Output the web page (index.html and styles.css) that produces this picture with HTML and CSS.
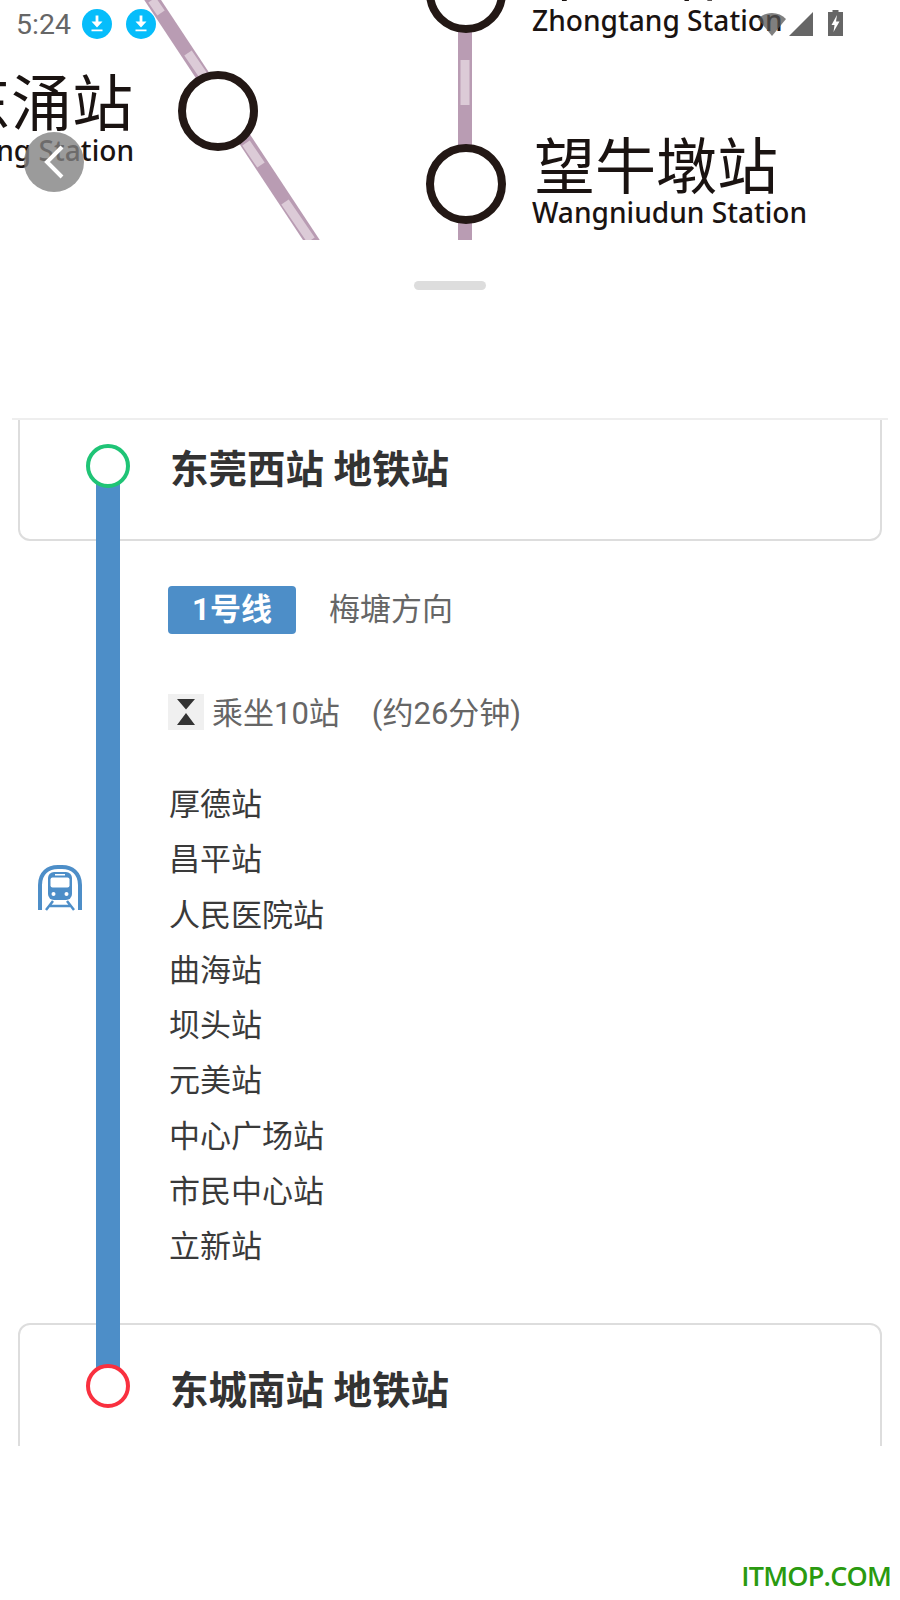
FILE: index.html
```html
<!DOCTYPE html>
<html lang="zh-CN">

<head>
    <meta charset="UTF-8">
    <meta name="viewport" content="width=device-width, initial-scale=1.0">
    <title>东莞地铁路线</title>
    <link rel="stylesheet" href="styles.css">
</head>

<body>
    <div id="page">
        <!-- Mapa -->
        <div class="map">
            <svg class="map-svg" width="900" height="240" viewBox="0 0 900 240">
                <path class="line" d="M150 -4 L314 244" />
                <path class="line-dash" d="M152 0 L161 13 M188 53 L203 75 M246 143 L261 165 M285 202 L311 240" />
                <path class="line" d="M465 0 V240" />
                <path class="line-dash" d="M465 60 V105" />

                <circle class="stop" cx="218" cy="111" r="36" />
                <circle class="stop" cx="466" cy="-7" r="36" />
                <circle class="stop" cx="466" cy="184" r="36" />

                <text class="name-zh" x="133" y="126" text-anchor="end">东涌站</text>
                <text class="name-en" x="134" y="161" text-anchor="end">Dongchong Station</text>
                <text class="name-zh" x="534" y="-4">中堂站</text>
                <text class="name-en" x="532" y="31">Zhongtang Station</text>
                <text class="name-zh" x="534" y="189">望牛墩站</text>
                <text class="name-en" x="532" y="223">Wangniudun Station</text>
            </svg>

            <div class="status-bar">
                <span class="clock">5:24</span>
                <svg class="dl-icon" width="30" height="30" viewBox="0 0 30 30">
                    <circle cx="15" cy="15" r="15" fill="#06bdfb" />
                    <path d="M13.6 6.5 H16.4 V12.5 H20.5 L15 18.5 L9.5 12.5 H13.6 Z M9.5 20.5 H20.5 V22.3 H9.5 Z" fill="#fff" />
                </svg>
                <svg class="dl-icon" width="30" height="30" viewBox="0 0 30 30">
                    <circle cx="15" cy="15" r="15" fill="#06bdfb" />
                    <path d="M13.6 6.5 H16.4 V12.5 H20.5 L15 18.5 L9.5 12.5 H13.6 Z M9.5 20.5 H20.5 V22.3 H9.5 Z" fill="#fff" />
                </svg>
                <div class="status-right">
                    <svg class="wifi" width="28" height="24" viewBox="0 0 28 24">
                        <path d="M0 7 C7 -1 21 -1 28 7 L14 24 Z" fill="#555" />
                    </svg>
                    <svg width="24" height="24" viewBox="0 0 24 24">
                        <path d="M24 0 V24 H0 Z" fill="#666" />
                    </svg>
                    <svg class="battery" width="15" height="26" viewBox="0 0 15 26">
                        <path d="M4.5 0 H10.5 V2 H15 V26 H0 V2 H4.5 Z" fill="#666" />
                        <path d="M9 5 L3.5 15 H6.5 L5.5 22 L11.5 11.5 H8 Z" fill="#fff" />
                    </svg>
                </div>
            </div>

            <button class="back-btn">
                <svg width="60" height="60" viewBox="0 0 60 60">
                    <path d="M38 15 L23 30 L38 45" fill="none" stroke="#fff" stroke-width="4" />
                </svg>
            </button>
        </div>

        <!-- Panel de ruta -->
        <div class="sheet">
            <div class="handle"></div>
            <div class="divider"></div>

            <div class="route">
                <div class="station-card first">
                    <span class="station-name">东莞西站 地铁站</span>
                </div>

                <div class="segment">
                    <div class="line-row">
                        <span class="line-badge">1号线</span>
                        <span class="direction">梅塘方向</span>
                    </div>
                    <div class="ride-row">
                        <span class="hourglass">
                            <svg width="36" height="36" viewBox="0 0 36 36">
                                <path d="M9 5 H27 L18 15.5 Z M18 19 L27 31 H9 Z" fill="#333" />
                            </svg>
                        </span>
                        <span class="ride-count">乘坐10站</span>
                        <span class="ride-time">(约26分钟)</span>
                    </div>
                    <ul class="stops">
                        <li>厚德站</li>
                        <li>昌平站</li>
                        <li>人民医院站</li>
                        <li>曲海站</li>
                        <li>坝头站</li>
                        <li>元美站</li>
                        <li>中心广场站</li>
                        <li>市民中心站</li>
                        <li>立新站</li>
                    </ul>
                </div>

                <div class="station-card last">
                    <span class="station-name">东城南站 地铁站</span>
                </div>

                <div class="route-line"></div>
                <div class="node start"></div>
                <div class="node end"></div>
                <svg class="train-icon" width="44" height="46" viewBox="0 0 44 46">
                    <path d="M2 45 V20 C2 8 10 2 20 2 H24 C34 2 42 8 42 20 V45" fill="none" stroke="#4d8ec8" stroke-width="4" />
                    <rect x="10" y="7" width="24" height="28" rx="6" fill="#4d8ec8" />
                    <rect x="12.5" y="12.5" width="19" height="10" rx="2" fill="#fff" />
                    <rect x="17" y="9" width="10" height="1.5" fill="#fff" />
                    <circle cx="15.5" cy="29" r="2" fill="#fff" />
                    <circle cx="28.5" cy="29" r="2" fill="#fff" />
                    <path d="M15 36 L8 45 M29 36 L36 45 M12 41 H32" fill="none" stroke="#4d8ec8" stroke-width="2.5" />
                </svg>
            </div>
        </div>

        <div class="watermark">ITMOP.COM</div>
    </div>
</body>

</html>
```

FILE: styles.css
```css
body {
    margin: 0;
    padding: 0;
    background-color: #fff;
    font-family: Roboto, "Noto Sans CJK SC", sans-serif;
}

#page {
    position: relative;
    width: 900px;
    height: 1600px;
    overflow: hidden;
}

/* Mapa */
.map {
    position: relative;
    height: 240px;
    overflow: hidden;
}

.map-svg {
    display: block;
}

.line {
    fill: none;
    stroke: #b99cb3;
    stroke-width: 14;
}

.line-dash {
    fill: none;
    stroke: #dccbd7;
    stroke-width: 9;
}

.stop {
    fill: #fff;
    stroke: #231815;
    stroke-width: 8;
}

.name-zh {
    font-family: "Noto Sans CJK SC", sans-serif;
    font-size: 61px;
    fill: #1a1311;
}

.name-en {
    font-family: "Noto Sans", sans-serif;
    font-size: 28.1px;
    font-weight: 500;
    fill: #1a1311;
}

.status-bar {
    position: absolute;
    top: 0;
    left: 0;
    right: 0;
    height: 48px;
    display: flex;
    align-items: center;
    padding-left: 16px;
    box-sizing: border-box;
}

.clock {
    font-size: 28.5px;
    color: #666;
    margin-right: 11px;
}

.dl-icon {
    margin-right: 14px;
}

.status-right {
    position: absolute;
    top: 10px;
    left: 758px;
    display: flex;
    align-items: flex-end;
}

.status-right svg {
    display: block;
    margin-right: 3px;
}

.status-right .wifi {
    opacity: 0.75;
}

.status-right .battery {
    margin-left: 12px;
    margin-right: 0;
}

.back-btn {
    position: absolute;
    left: 24px;
    top: 132px;
    width: 60px;
    height: 60px;
    padding: 0;
    border: none;
    border-radius: 50%;
    background-color: rgba(130, 130, 130, 0.8);
}

.back-btn svg {
    display: block;
}

/* Panel */
.sheet {
    display: flex;
    flex-direction: column;
}

.handle {
    align-self: center;
    width: 72px;
    height: 9px;
    margin-top: 41px;
    border-radius: 5px;
    background-color: #ddd;
}

.divider {
    height: 2px;
    margin: 128px 12px 0 12px;
    background-color: #eee;
}

.route {
    position: relative;
    height: 1026px;
    overflow: hidden;
}

.station-card {
    display: flex;
    align-items: center;
    box-sizing: border-box;
    margin: 0 18px;
    padding-left: 150px;
    border: 2px solid #ddd;
    border-radius: 12px;
    background-color: #fff;
}

.station-card.first {
    height: 135px;
    margin-top: -14px;
    padding-top: 28px;
    padding-bottom: 44px;
}

.station-card.last {
    height: 150px;
    padding-bottom: 22px;
}

.station-name {
    font-size: 38.5px;
    font-weight: bold;
    color: #333;
}

.segment {
    padding: 45px 0 49px 168px;
}

.line-row {
    display: flex;
    align-items: center;
    gap: 33px;
}

.line-badge {
    width: 128px;
    height: 48px;
    line-height: 48px;
    text-align: center;
    border-radius: 4px;
    background-color: #4d8ec8;
    color: #fff;
    font-size: 31px;
    font-weight: bold;
}

.direction {
    font-size: 31px;
    color: #666;
    position: relative;
    top: -4px;
}

.ride-row {
    display: flex;
    align-items: center;
    height: 36px;
    margin-top: 60px;
    font-size: 31px;
    line-height: 32px;
    color: #666;
}

.hourglass {
    width: 36px;
    height: 36px;
    margin-right: 8px;
    background-color: #f0f0f0;
}

.hourglass svg {
    display: block;
}

.ride-count {
    margin-right: 32px;
    padding-top: 4px;
}

.ride-time {
    padding-top: 4px;
}

.stops {
    list-style: none;
    margin: 47px 0 0 1px;
    padding: 0;
    font-size: 31px;
    line-height: 55.25px;
    color: #3a3a3a;
}

.route-line {
    position: absolute;
    left: 96px;
    top: 46px;
    width: 24px;
    height: 920px;
    background-color: #4d8ec8;
}

.node {
    position: absolute;
    left: 86px;
    width: 44px;
    height: 44px;
    box-sizing: border-box;
    border-radius: 50%;
    background-color: #fff;
}

.node.start {
    top: 24px;
    border: 4px solid #1fc476;
}

.node.end {
    top: 944px;
    border: 4px solid #f9303f;
}

.train-icon {
    position: absolute;
    left: 38px;
    top: 445px;
}

.watermark {
    position: absolute;
    right: 9px;
    top: 1557px;
    font-family: "Open Sans", sans-serif;
    font-size: 27px;
    font-weight: 600;
    letter-spacing: -0.8px;
    color: #2a9a10;
}
```
